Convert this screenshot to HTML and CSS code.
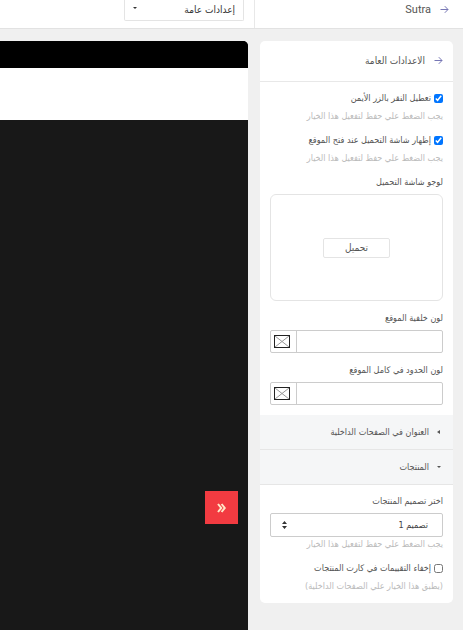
FILE: index.html
```html
<!DOCTYPE html>
<html lang="ar" dir="rtl">
<head>
    <meta charset="UTF-8">
    <meta name="viewport" content="width=device-width, initial-scale=1.0">
    <title>Sutra</title>
    <link rel="stylesheet" href="styles.css">
</head>
<body>

<header class="topbar">
    <div class="brand">
        <a href="#" class="back" aria-label="رجوع">
            <svg width="9" height="9" viewBox="0 0 9 9"><path d="M0.5 4.5H8M4.8 1.2L8 4.5L4.8 7.8"/></svg>
        </a>
        <span class="brand-name">Sutra</span>
    </div>
    <div class="topbar-main">
        <div class="page-select">
            <select aria-label="الصفحة">
                <option>إعدادات عامة</option>
            </select>
            <svg class="caret" width="4" height="2" viewBox="0 0 4 2"><path d="M0 0H4L2 2Z"/></svg>
        </div>
    </div>
</header>

<div class="layout">
    <aside class="panel">
        <div class="panel-header">
            <a href="#" class="back" aria-label="رجوع">
                <svg width="9" height="9" viewBox="0 0 9 9"><path d="M0.5 4.5H8M4.8 1.2L8 4.5L4.8 7.8"/></svg>
            </a>
            <h2>الاعدادات العامة</h2>
        </div>

        <div class="panel-body">
            <div class="field">
                <label class="check"><input type="checkbox" checked> تعطيل النقر بالزر الأيمن</label>
                <p class="hint">يجب الضغط علي حفظ لتفعيل هذا الخيار</p>
            </div>
            <div class="field">
                <label class="check"><input type="checkbox" checked> إظهار شاشة التحميل عند فتح الموقع</label>
                <p class="hint">يجب الضغط علي حفظ لتفعيل هذا الخيار</p>
            </div>
            <div class="field">
                <span class="label">لوجو شاشة التحميل</span>
                <div class="upload">
                    <button type="button">تحميل</button>
                </div>
            </div>
            <div class="field">
                <label class="label" for="bg-color">لون خلفية الموقع</label>
                <div class="color-input">
                    <input type="text" id="bg-color">
                    <button type="button" class="swatch" aria-label="اختر اللون">
                        <svg width="16" height="13" viewBox="0 0 16 13"><path class="cross" d="M1 1L15 12M15 1L1 12"/><rect x="0.5" y="0.5" width="15" height="12"/></svg>
                    </button>
                </div>
            </div>
            <div class="field">
                <label class="label" for="border-color">لون الحدود في كامل الموقع</label>
                <div class="color-input">
                    <input type="text" id="border-color">
                    <button type="button" class="swatch" aria-label="اختر اللون">
                        <svg width="16" height="13" viewBox="0 0 16 13"><path class="cross" d="M1 1L15 12M15 1L1 12"/><rect x="0.5" y="0.5" width="15" height="12"/></svg>
                    </button>
                </div>
            </div>
        </div>

        <button type="button" class="section" aria-expanded="false">
            <svg width="4" height="4" viewBox="0 0 4 4"><path d="M3 0V4L0 2Z"/></svg>
            العنوان في الصفحات الداخلية
        </button>
        <button type="button" class="section" aria-expanded="true">
            <svg width="4" height="4" viewBox="0 0 4 4"><path d="M0 1H4L2 3Z"/></svg>
            المنتجات
        </button>

        <div class="panel-body">
            <div class="field">
                <label class="label" for="product-design">اختر تصميم المنتجات</label>
                <div class="design-select">
                    <select id="product-design">
                        <option>تصميم 1</option>
                    </select>
                    <svg class="sort" width="5" height="8" viewBox="0 0 5 8"><path d="M0 3H5L2.5 0ZM0 5H5L2.5 8Z"/></svg>
                </div>
                <p class="hint">يجب الضغط علي حفظ لتفعيل هذا الخيار</p>
            </div>
            <div class="field">
                <label class="check"><input type="checkbox"> إخفاء التقييمات في كارت المنتجات</label>
                <p class="hint">(يطبق هذا الخيار علي الصفحات الداخلية)</p>
            </div>
        </div>
    </aside>

    <main class="preview">
        <div class="preview-top"></div>
        <div class="preview-header"></div>
        <button type="button" class="toggle" aria-label="إخفاء القائمة">
            <svg width="9" height="10" viewBox="0 0 9 10"><path d="M1 1L4.2 5L1 9M4.6 1L7.8 5L4.6 9"/></svg>
        </button>
    </main>
</div>

</body>
</html>
```
FILE: styles.css
```css
* {
    box-sizing: border-box;
}
body {
    margin: 0;
    height: 100vh;
    display: flex;
    flex-direction: column;
    overflow: hidden;
    background-color: #f0f0f0;
    color: #555;
    font-family: "DejaVu Sans Condensed", "DejaVu Sans", sans-serif;
    font-size: 9px;
}
button, input, select {
    font: inherit;
    color: inherit;
    margin: 0;
}
svg {
    display: block;
    flex: none;
}
.back svg {
    fill: none;
    stroke: #7777b5;
}

/* Top bar */
.topbar {
    display: flex;
    flex: none;
    height: 29px;
    background-color: #fff;
    border-bottom: 1px solid #e2e2e2;
}
.brand {
    display: flex;
    gap: 9px;
    width: 209px;
    padding: 4px 14px 0 0;
    border-left: 1px solid #e8e8e8;
}
.brand .back {
    padding-top: 1px;
}
.brand-name {
    font-family: Roboto, sans-serif;
    font-size: 11px;
    line-height: 11px;
}
.topbar-main {
    flex: 1;
    padding-right: 10px;
}
.page-select {
    position: relative;
    width: 120px;
    height: 21px;
    font-size: 10px;
}
.page-select select {
    appearance: none;
    width: 100%;
    height: 100%;
    padding: 0 8px 2px 20px;
    border: 1px solid #e4e4e4;
    border-top: 0;
    border-radius: 0 0 2px 2px;
    background-color: #fff;
    color: #333;
}
.caret {
    position: absolute;
    left: 9px;
    top: 7px;
    fill: #333;
}

/* Layout */
.layout {
    display: flex;
    flex: 1;
    align-items: flex-start;
    gap: 12px;
    padding: 12px 10px 0 0;
}
.panel {
    width: 193px;
    flex: none;
    overflow: hidden;
    background-color: #fff;
    border-radius: 5px;
}
.panel-header {
    display: flex;
    align-items: center;
    gap: 9px;
    height: 41px;
    padding: 0 10px 2px;
    border-bottom: 1px solid #e8e8e8;
}
.panel-header h2 {
    margin: 0;
    font-size: 10px;
    font-weight: normal;
}
.panel-body {
    display: flex;
    flex-direction: column;
    gap: 8px;
    padding: 7px 10px 10px;
}
.check {
    display: flex;
    align-items: center;
    gap: 3px;
    height: 18px;
    white-space: nowrap;
}
.check input {
    width: 9px;
    height: 9px;
    flex: none;
}
.check + .hint {
    margin-top: 2px;
}
.hint {
    margin: 0;
    color: #bbb;
    line-height: 14px;
    white-space: nowrap;
}
.label {
    display: block;
    height: 21px;
    line-height: 18px;
}
.upload {
    display: flex;
    align-items: center;
    justify-content: center;
    height: 107px;
    border: 1px solid #e4e4e4;
    border-radius: 6px;
}
.upload button {
    width: 67px;
    height: 20px;
    padding: 0;
    border: 1px solid #e4e4e4;
    border-radius: 2px;
    background-color: #fff;
    font-size: 10px;
}
.color-input {
    display: flex;
    height: 23px;
    border: 1px solid #ccc;
    border-radius: 2px;
}
.color-input input {
    flex: 1;
    min-width: 0;
    padding: 0 6px;
    border: 0;
    background: none;
}
.swatch {
    display: flex;
    align-items: center;
    width: 26px;
    padding: 0 3px;
    border: 0;
    border-right: 1px solid #ccc;
    background: none;
    direction: ltr;
}
.swatch svg {
    fill: none;
    stroke: #222;
}
.swatch .cross {
    stroke: #999;
}

/* Collapsible sections */
.section {
    display: flex;
    align-items: center;
    gap: 8px;
    width: 100%;
    height: 35px;
    padding: 0 12px;
    border: 0;
    border-bottom: 1px solid #e6e6e6;
    background-color: #f5f6f7;
}
.section svg {
    fill: #555;
}
.design-select {
    position: relative;
    height: 24px;
}
.design-select select {
    appearance: none;
    width: 100%;
    height: 100%;
    padding: 0 14px 0 24px;
    border: 1px solid #ccc;
    border-radius: 2px;
    background-color: #fff;
    color: #444;
}
.sort {
    position: absolute;
    left: 12px;
    top: 8px;
    fill: #333;
}

/* Site preview */
.preview {
    flex: 1;
    align-self: stretch;
    display: flex;
    flex-direction: column;
    overflow: hidden;
    background-color: #181818;
    border-radius: 0 5px 0 0;
}
.preview-top {
    height: 27px;
    background-color: #000;
}
.preview-header {
    height: 52px;
    background-color: #fff;
}
.toggle {
    display: flex;
    align-items: center;
    justify-content: center;
    width: 33px;
    height: 33px;
    margin: auto 10px 106px;
    padding: 0;
    border: 0;
    background-color: #f23b41;
}
.toggle svg {
    fill: none;
    stroke: #ffe8c8;
    stroke-width: 2;
}
```
